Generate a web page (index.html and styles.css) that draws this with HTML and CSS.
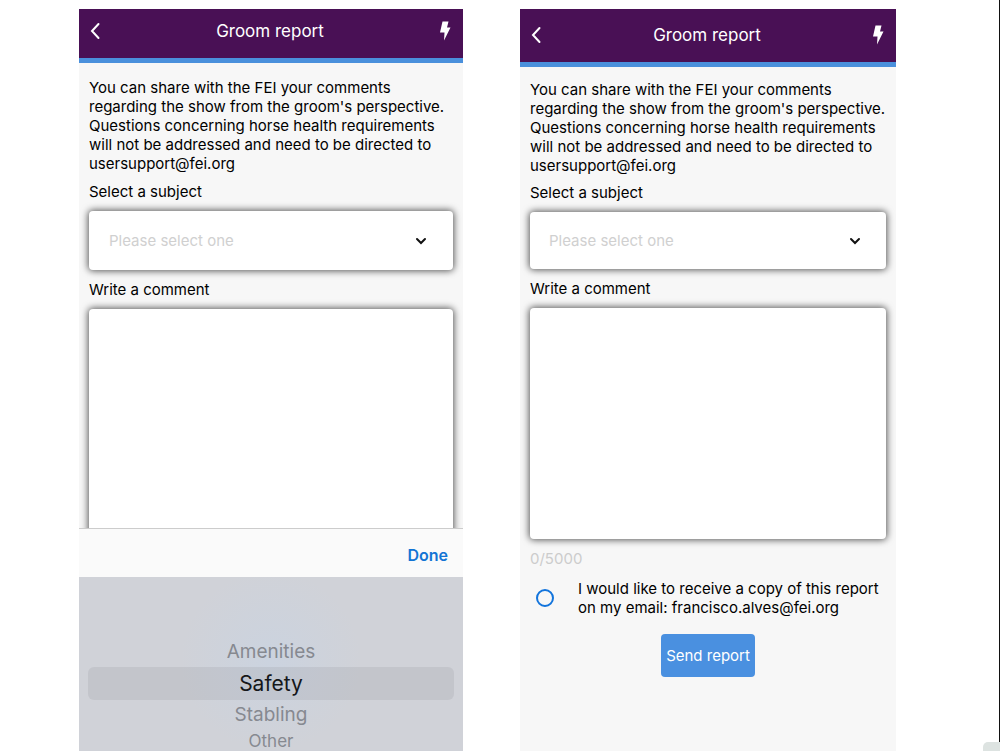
FILE: index.html
```html
<!DOCTYPE html>
<html lang="en">
  <head>
    <meta charset="UTF-8" />
    <meta name="viewport" content="width=device-width, initial-scale=1.0" />
    <title>Groom report</title>
    <link rel="stylesheet" href="styles.css">
  </head>
  <body>
    <main class="screens">
      <!-- Subject picker open -->
      <section class="phone">
        <header class="top-bar">
          <button type="button" class="icon-button" aria-label="Back">
            <svg width="12" height="18" viewBox="0 0 12 18"><path d="M9.500 2 L3 9 L9.500 16" /></svg>
          </button>
          <h1>Groom report</h1>
          <button type="button" class="icon-button" aria-label="Quick actions">
            <svg class="bolt" width="12" height="20" viewBox="0 0 12 20"><path d="M3.500 0.500 H9.500 L8 6.500 H11.500 L5 19.500 L5.500 11.500 H1 Z" /></svg>
          </button>
        </header>
        <form class="report">
          <p>You can share with the FEI your comments regarding the show from the groom's perspective. Questions concerning horse health requirements will not be addressed and need to be directed to usersupport@fei.org</p>
          <label for="subject-a">Select a subject</label>
          <div class="select-box">
            <select id="subject-a">
              <option>Please select one</option>
            </select>
            <svg width="12" height="8" viewBox="0 0 12 8"><path d="M2 2 L6 6 L10 2" /></svg>
          </div>
          <label for="comment-a">Write a comment</label>
          <textarea id="comment-a"></textarea>
        </form>
        <div class="sheet">
          <div class="sheet-bar">
            <button type="button" class="done">Done</button>
          </div>
          <ul class="picker" role="listbox" aria-label="Subject">
            <li role="option">Amenities</li>
            <li role="option" class="selected" aria-selected="true">Safety</li>
            <li role="option">Stabling</li>
            <li role="option" class="far">Other</li>
          </ul>
        </div>
      </section>

      <!-- Full form -->
      <section class="phone full">
        <header class="top-bar">
          <button type="button" class="icon-button" aria-label="Back">
            <svg width="12" height="18" viewBox="0 0 12 18"><path d="M9.500 2 L3 9 L9.500 16" /></svg>
          </button>
          <h1>Groom report</h1>
          <button type="button" class="icon-button" aria-label="Quick actions">
            <svg class="bolt" width="12" height="20" viewBox="0 0 12 20"><path d="M3.500 0.500 H9.500 L8 6.500 H11.500 L5 19.500 L5.500 11.500 H1 Z" /></svg>
          </button>
        </header>
        <form class="report">
          <p>You can share with the FEI your comments regarding the show from the groom's perspective. Questions concerning horse health requirements will not be addressed and need to be directed to usersupport@fei.org</p>
          <label for="subject-b">Select a subject</label>
          <div class="select-box">
            <select id="subject-b">
              <option>Please select one</option>
            </select>
            <svg width="12" height="8" viewBox="0 0 12 8"><path d="M2 2 L6 6 L10 2" /></svg>
          </div>
          <label for="comment-b">Write a comment</label>
          <textarea id="comment-b"></textarea>
          <div class="counter">0/5000</div>
          <div class="copy">
            <input type="checkbox" id="copy" />
            <label for="copy">I would like to receive a copy of this report on my email: francisco.alves@fei.org</label>
          </div>
          <button type="submit" class="send">Send report</button>
        </form>
      </section>
    </main>
    <div class="corner"></div>
  </body>
</html>
```

FILE: styles.css
```css
* {
  box-sizing: border-box;
}

body {
  margin: 0;
  background-color: #fff;
  border-right: 1px solid #111;
  font-family: Inter, sans-serif;
  font-size: 15px;
  line-height: 19px;
  color: #000;
}

button,
select,
textarea {
  font: inherit;
}

.screens {
  display: grid;
  grid-template-columns: 384fr 376fr;
  gap: 57px;
  height: 100vh;
  padding: 9px 103px 0 79px;
}

.phone {
  display: flex;
  flex-direction: column;
  min-width: 0;
  min-height: 0;
  background-color: #f7f7f7;
}

.top-bar {
  display: flex;
  flex-shrink: 0;
  align-items: center;
  justify-content: space-between;
  height: 54px;
  padding: 0 12px 6px 10px;
  background-color: #491055;
  border-bottom: 5px solid #4a90dc;
  color: #fff;
}

.full .top-bar {
  height: 58px;
  padding-bottom: 2px;
}

.top-bar h1 {
  margin: 0;
  font-size: 17px;
  font-weight: 400;
  line-height: 20px;
}

.icon-button {
  display: flex;
  padding: 0;
  border: none;
  background: none;
}

.icon-button svg {
  fill: none;
  stroke: #fff;
  stroke-width: 2;
  stroke-linecap: round;
}

.icon-button .bolt {
  fill: #fff;
  stroke: none;
}

.report {
  display: flex;
  flex: 1;
  flex-direction: column;
  min-height: 0;
  padding: 15px 10px 0;
  overflow: hidden;
}

.full .report {
  padding-top: 13px;
}

.report p {
  margin: 0 0 9px;
}

.full .report p {
  margin-bottom: 8px;
}

.select-box,
.report textarea {
  flex-shrink: 0;
  margin: 10px 0;
  border: none;
  border-radius: 4px;
  background-color: #fff;
  box-shadow: 0 0 7px 1px rgba(0, 0, 0, 0.65);
}

.select-box {
  display: flex;
  align-items: center;
  height: 59px;
  padding: 0 26px 0 20px;
}

.full .select-box {
  height: 57px;
  padding: 0 25px 0 19px;
}

.select-box select {
  flex: 1;
  padding: 0;
  border: none;
  background: none;
  color: #d0d0d0;
  appearance: none;
}

.select-box svg {
  fill: none;
  stroke: #111;
  stroke-width: 2;
  stroke-linecap: round;
}

.report textarea {
  height: 231px;
  padding: 12px;
  resize: none;
}

.counter {
  color: #ccc;
}

.copy {
  display: flex;
  align-items: center;
  gap: 24px;
  margin-top: 11px;
  padding-left: 6px;
}

.copy input {
  flex-shrink: 0;
  width: 18px;
  height: 18px;
  margin: 0;
  border: 2px solid #1274dc;
  border-radius: 50%;
  appearance: none;
}

.copy input:checked {
  background-color: #1274dc;
}

.send {
  align-self: center;
  height: 43px;
  margin-top: 17px;
  padding: 0 5px;
  border: none;
  border-radius: 4px;
  background-color: #4a90e0;
  color: #fff;
}

.sheet {
  flex-shrink: 0;
  border-top: 1px solid #ccc;
}

.sheet-bar {
  display: flex;
  align-items: center;
  justify-content: flex-end;
  height: 48px;
  padding: 4px 15px 0;
  background-color: #fafafa;
}

.done {
  padding: 0;
  border: none;
  background: none;
  color: #1274d4;
  font-size: 16px;
  font-weight: 600;
}

.picker {
  height: 174px;
  margin: 0;
  padding: 60px 9px 0;
  overflow: hidden;
  background: radial-gradient(circle at 50% 48%, #cbd3df, #d0d2d8 90px);
  color: #868990;
  font-size: 19px;
  line-height: 30px;
  list-style: none;
  text-align: center;
}

.picker .selected {
  border-radius: 6px;
  background-color: rgba(120, 120, 130, 0.14);
  color: #15171a;
  font-size: 21px;
  line-height: 33px;
}

.picker .far {
  font-size: 17px;
  line-height: 22px;
}

/* Floating tab in the bottom corner */
.corner {
  position: absolute;
  right: 0;
  bottom: 0;
  width: 17px;
  height: 9px;
  border-radius: 5px 0 0 0;
  background-color: #dde3e1;
}
```
